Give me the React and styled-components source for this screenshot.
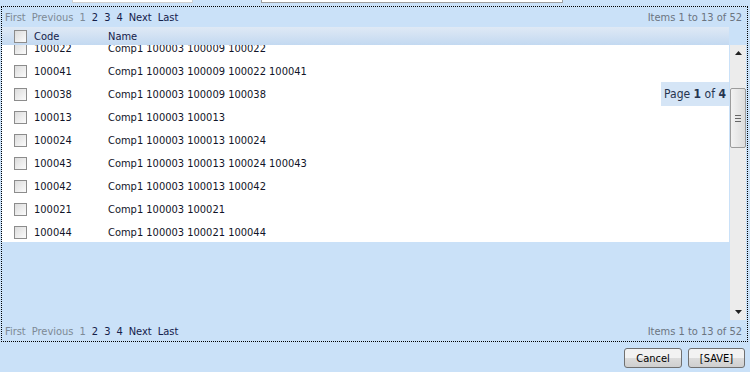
import React from "react";
import styled, { createGlobalStyle } from "styled-components";

const rows = [
  ["100022", "Comp1 100003 100009 100022"],
  ["100041", "Comp1 100003 100009 100022 100041"],
  ["100038", "Comp1 100003 100009 100038"],
  ["100013", "Comp1 100003 100013"],
  ["100024", "Comp1 100003 100013 100024"],
  ["100043", "Comp1 100003 100013 100024 100043"],
  ["100042", "Comp1 100003 100013 100042"],
  ["100021", "Comp1 100003 100021"],
  ["100044", "Comp1 100003 100021 100044"],
];

const pagerLinks = [
  { label: "First", off: true },
  { label: "Previous", off: true },
  { label: "1", off: true },
  { label: "2" },
  { label: "3" },
  { label: "4" },
  { label: "Next" },
  { label: "Last" },
];

const Pager = () => (
  <PagerBar>
    <div>
      {pagerLinks.map((l) => (
        <PageLink key={l.label} $off={l.off}>
          {l.label}
        </PageLink>
      ))}
    </div>
    <ItemsInfo>Items 1 to 13 of 52</ItemsInfo>
  </PagerBar>
);

const Arrow = ({ up }) => (
  <svg width="7" height="4" viewBox="0 0 7 4">
    <path d={up ? "M0 4 L3.5 0 L7 4 Z" : "M0 0 L3.5 4 L7 0 Z"} fill="#222" />
  </svg>
);

const App = () => {
  return (
    <>
      <GlobalStyle />
      <Page>
        <TopStrip>
          <TopInput $w={119} />
          <TopInput $w={300} $dark />
        </TopStrip>
        <Frame>
          <Pager />
          <Grid>
            <GridMain>
              <HeaderRow>
                <Check />
                <CodeCell>Code</CodeCell>
                <NameCell>Name</NameCell>
              </HeaderRow>
              <GridBody>
                <RowList>
                  {rows.map(([code, name]) => (
                    <Row key={code}>
                      <Check />
                      <CodeCell>{code}</CodeCell>
                      <NameCell>{name}</NameCell>
                    </Row>
                  ))}
                </RowList>
              </GridBody>
              <PageTip>
                Page <b>1</b> of <b>4</b>
              </PageTip>
            </GridMain>
            <ScrollBar>
              <ScrollBtn>
                <Arrow up />
              </ScrollBtn>
              <TrackGap $h={27} />
              <Thumb>
                <Grip />
              </Thumb>
              <TrackGap $grow />
              <ScrollBtn>
                <Arrow />
              </ScrollBtn>
            </ScrollBar>
          </Grid>
          <Pager />
        </Frame>
        <Footer>
          <Button $w={58}>Cancel</Button>
          <Button $w={57}>[SAVE]</Button>
        </Footer>
      </Page>
    </>
  );
};

export default App;

const GlobalStyle = createGlobalStyle`
  body {
    margin: 0;
    background: #cae1f8;
    font-family: "DejaVu Sans Condensed", "Liberation Sans", sans-serif;
    font-size: 11px;
  }
`;

const Page = styled.div`
  width: 750px;
  height: 372px;
  overflow: hidden;
`;

const TopStrip = styled.div`
  display: flex;
  height: 6px;
  padding-left: 72px;
  gap: 68px;
`;

const TopInput = styled.div`
  width: ${(p) => p.$w}px;
  height: 2px;
  background: #fff;
  border: 1px solid ${(p) => (p.$dark ? "#a0a0a0" : "#d0d0d0")};
  border-top: none;
`;

const Frame = styled.div`
  margin-left: 1px;
  width: 745px;
  height: 334px;
  border: 1px dotted #000;
  display: flex;
  flex-direction: column;
`;

const PagerBar = styled.div`
  height: 20px;
  display: flex;
  align-items: center;
  justify-content: space-between;
  padding: 0 5px 0 3px;
`;

const PageLink = styled.span`
  margin-right: 6px;
  color: ${(p) => (p.$off ? "#7d8995" : "#14204a")};
`;

const ItemsInfo = styled.span`
  color: #6a7480;
`;

const Grid = styled.div`
  flex: 1;
  display: flex;
`;

const GridMain = styled.div`
  position: relative;
  width: 727px;
  display: flex;
  flex-direction: column;
`;

const HeaderRow = styled.div`
  height: 18px;
  display: flex;
  align-items: center;
  padding-left: 12px;
  background: linear-gradient(#dfe9f5, #c3d9f1);
  color: #14204a;
`;

const GridBody = styled.div`
  height: 197px;
  background: #fff;
  overflow: hidden;
`;

const RowList = styled.div`
  margin-top: -8px;
`;

const Row = styled.div`
  height: 23px;
  display: flex;
  align-items: center;
  padding-left: 12px;
  color: #111428;
`;

const Check = styled.span`
  width: 11px;
  height: 11px;
  border: 1px solid #8c8c8c;
  background: linear-gradient(135deg, #dcdcdc, #fbfbfb);
  box-sizing: content-box;
`;

const CodeCell = styled.span`
  width: 74px;
  margin-left: 7px;
`;

const NameCell = styled.span``;

const PageTip = styled.div`
  position: absolute;
  top: 55px;
  right: 0;
  width: 68px;
  height: 24px;
  line-height: 24px;
  text-align: center;
  background: #d5e5f6;
  color: #26344f;
  font-size: 12px;
  white-space: nowrap;
`;

const ScrollBar = styled.div`
  width: 16px;
  margin: 18px 1px 1px 1px;
  background: #ececec;
  display: flex;
  flex-direction: column;
`;

const ScrollBtn = styled.div`
  height: 16px;
  display: flex;
  align-items: center;
  justify-content: center;
`;

const TrackGap = styled.div`
  height: ${(p) => (p.$h ? `${p.$h}px` : "auto")};
  flex: ${(p) => (p.$grow ? 1 : "none")};
`;

const Thumb = styled.div`
  height: 58px;
  border: 1px solid #9c9c9c;
  border-radius: 2px;
  background: linear-gradient(90deg, #f2f2f2, #dcdcdc);
  display: flex;
  align-items: center;
  justify-content: center;
`;

const Grip = styled.div`
  width: 6px;
  height: 5px;
  border-top: 1px solid #666;
  border-bottom: 1px solid #666;
  background: linear-gradient(#666, #666) center / 100% 1px no-repeat;
`;

const Footer = styled.div`
  display: flex;
  justify-content: flex-end;
  gap: 6px;
  padding: 6px 5px 0 0;
`;

const Button = styled.button`
  width: ${(p) => p.$w}px;
  height: 20px;
  padding: 0;
  border: 1px solid #707070;
  border-radius: 3px;
  background: linear-gradient(#f2f2f2 50%, #dcdcdc 50%, #cfcfcf);
  font-family: inherit;
  font-size: 11px;
  color: #000;
`;
